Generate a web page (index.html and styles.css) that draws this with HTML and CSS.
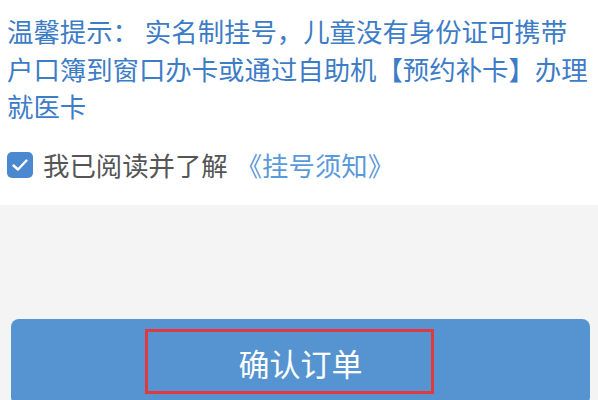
FILE: index.html
```html
<!DOCTYPE html>
<html lang="zh">
<head>
<meta charset="utf-8">
<title>确认订单</title>
<link rel="stylesheet" href="styles.css">
</head>
<body>
<section class="notice">
  <p class="tip">温馨提示：&nbsp;实名制挂号，儿童没有身份证可携带<br>户口簿到窗口办卡或通过自助机【预约补卡】办理<br>就医卡</p>
  <label class="agree">
    <span class="check">
      <svg viewBox="0 0 26 26" width="26" height="26"><polyline points="6.5,13.5 11,17.5 19.5,8.5" fill="none" stroke="#fff" stroke-width="2.4" stroke-linecap="round" stroke-linejoin="round"/></svg>
    </span>
    <span class="agree-text">我已阅读并了解</span><a class="rule-link" href="#">《挂号须知》</a>
  </label>
</section>
<footer class="actions">
  <button class="confirm" type="button">确认订单<span class="mark"></span></button>
</footer>
</body>
</html>
```
FILE: styles.css
```css
html, body {
  margin: 0;
  padding: 0;
}
body {
  background: #f4f4f5;
  font-family: "Noto Sans CJK SC", "Noto Sans", sans-serif;
  width: 598px;
  height: 400px;
  overflow: hidden;
}
.notice {
  background: #fff;
  height: 205px;
  box-sizing: border-box;
  padding: 12px 2px 0 7px;
}
.tip {
  margin: 0;
  color: #3d7cc6;
  font-size: 26.4px;
  line-height: 37.5px;
}
.agree {
  display: flex;
  align-items: center;
  margin-top: 25px;
  font-size: 26.4px;
  line-height: 30px;
}
.check {
  width: 26px;
  height: 26px;
  border-radius: 5px;
  background: #4a88cf;
  display: flex;
  margin-right: 10px;
}
.agree-text {
  color: #555;
}
.rule-link {
  margin-left: 8px;
  color: #5b9ad9;
  text-decoration: none;
}
.actions {
  padding: 114px 8px 0 11px;
}
.confirm {
  position: relative;
  display: flex;
  align-items: center;
  justify-content: center;
  width: 100%;
  height: 86px;
  border: 0;
  border-radius: 8px;
  background: #5594d0;
  color: #fff;
  font-family: "Noto Sans CJK SC", "Noto Sans", sans-serif;
  font-size: 31px;
  padding: 0;
}
.mark {
  position: absolute;
  left: 134px;
  top: 10px;
  width: 289px;
  height: 65px;
  box-sizing: border-box;
  border: 3px solid #e0393e;
}
```
